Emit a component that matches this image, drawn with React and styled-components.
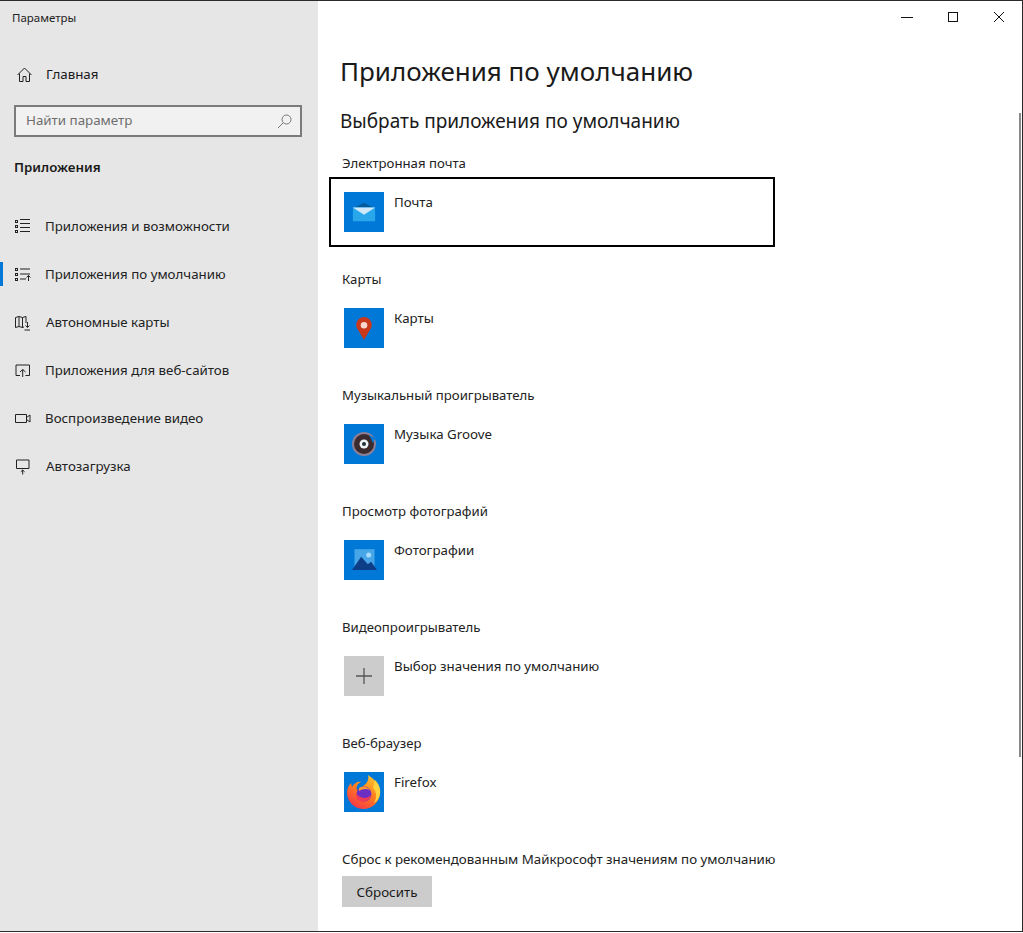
import React from 'react';
import styled, { createGlobalStyle } from 'styled-components';

const Global = createGlobalStyle`
  html, body { margin: 0; padding: 0; background: #fff; }
  body { font-family: "Noto Sans", "Open Sans", sans-serif; color: #1a1a1a; }
  * { box-sizing: border-box; }
`;

const Win = styled.div`
  position: relative;
  width: 1023px;
  height: 932px;
  display: flex;
  overflow: hidden;
  background: #fff;
  border-top: 1px solid #2b2b2b;
  border-right: 1px solid #2b2b2b;
  border-bottom: 1px solid #2b2b2b;
`;
const Sidebar = styled.aside`
  width: 318px;
  flex: none;
  background: #e6e6e6;
  display: flex;
  flex-direction: column;
`;
const AppTitle = styled.div`
  font-size: 11.5px;
  line-height: 16px;
  padding: 9px 0 0 12px;
  height: 49px;
  color: #222;
`;
const HomeRow = styled.div`
  height: 48px;
  display: flex;
  align-items: center;
  padding-left: 16px;
  gap: 13px;
  font-size: 13.35px;
`;
const Search = styled.div`
  margin: 7px 16px 0 14px;
  height: 32px;
  border: 2px solid #7b7b7b;
  background: #f1f1f1;
  display: flex;
  align-items: center;
  justify-content: space-between;
  padding: 0 7px 2px 10px;
  font-size: 13.35px;
  color: #6e6e6e;
`;
const SearchGlyph = styled.svg`
  width: 17px;
  height: 17px;
  margin-top: 2px;
  flex: none;
  fill: none;
  stroke: #777;
  stroke-width: 1;
`;
const Section = styled.div`
  margin: 20px 0 0 14px;
  height: 20px;
  line-height: 20px;
  font-size: 13.35px;
  font-weight: 600;
  color: #1a1a1a;
`;
const Nav = styled.nav`
  margin-top: 25px;
  display: flex;
  flex-direction: column;
`;
const NavItem = styled.div`
  position: relative;
  height: 48px;
  display: flex;
  align-items: center;
  padding-left: 14px;
  gap: ${p => p.$gap || 14}px;
  font-size: 13.3px;
  color: #222;
  ${p => p.$active && `
    &::before {
      content: "";
      position: absolute;
      left: 0; top: 12px;
      width: 3px; height: 24px;
      background: #0078d7;
    }
  `}
`;
const Glyph = styled.svg`
  width: 17px;
  height: 17px;
  flex: none;
  fill: none;
  stroke: #222;
  stroke-width: 1;
`;
const Main = styled.main`
  flex: 1;
  min-width: 0;
  display: flex;
  flex-direction: column;
`;
const Controls = styled.div`
  height: 32px;
  display: flex;
  justify-content: flex-end;
`;
const Ctl = styled.div`
  width: 46px;
  height: 32px;
  display: flex;
  align-items: center;
  justify-content: center;
`;
const Content = styled.div`
  padding-left: 22px;
  display: flex;
  flex-direction: column;
`;
const H1 = styled.h1`
  margin: 20px 0 0;
  height: 36px;
  line-height: 36px;
  font-size: 26px;
  font-weight: 400;
  color: #1a1a1a;
`;
const H2 = styled.h2`
  margin: 19px 0 0;
  height: 26px;
  line-height: 26px;
  font-size: 19px;
  font-weight: 400;
  color: #1a1a1a;
`;
const Groups = styled.div`
  margin-top: 19px;
  display: flex;
  flex-direction: column;
  gap: 22px;
`;
const Group = styled.section`
  display: flex;
  flex-direction: column;
  gap: 4px;
`;
const Label = styled.div`
  height: 20px;
  line-height: 20px;
  padding-left: 2px;
  font-size: ${p => p.$size || 13.2}px;
  color: #222;
`;
const Tile = styled.div`
  margin-left: -11px;
  width: 446px;
  height: 70px;
  border: 2px solid ${p => (p.$focus ? '#000' : 'transparent')};
  padding: 13px 13px;
  display: flex;
  gap: 10px;
`;
const TileIcon = styled.div`
  width: 40px;
  height: 40px;
  flex: none;
  background: ${p => p.$bg || '#0078d7'};
  display: flex;
  align-items: center;
  justify-content: center;
`;
const TileText = styled.div`
  line-height: 20px;
  font-size: 13.3px;
  color: #222;
`;
const Reset = styled.div`
  display: block;
`;
const ResetBtn = styled.div`
  margin: 7px 0 0 2px;
  width: 90px;
  height: 31px;
  background: #cccccc;
  display: flex;
  align-items: center;
  justify-content: center;
  font-size: 13.35px;
  color: #1a1a1a;
`;
const Scroll = styled.div`
  position: absolute;
  right: 1px;
  top: 112px;
  width: 2px;
  height: 644px;
  background: #8a8a8a;
`;

const Dots = () => (
  <>
    <rect x="1.5" y="2.5" width="2" height="2" />
    <rect x="1.5" y="7.5" width="2" height="2" />
    <rect x="1.5" y="12.5" width="2" height="2" />
  </>
);

const icons = {
  home: <path d="M8.5 2 1.5 9M8.500 2l7 7M3.500 7.500V15.500H7V10.500H10V15.500H13.500V7.500" />,
  list: <><Dots /><path d="M6 1.500H16M6 5.500H16M6 9.500H16M6 13.500H16" /></>,
  def: <><Dots /><path d="M6 3H16M6 8H16M6 13H12M14.500 15V9.500M12.500 11.500 14.500 9.500 16.500 11.500" /></>,
  map: <path d="M1.500 3.500 5 2.500 8.500 3.500 12 2.500V9M1.500 3.500V13.500L5 12.500 8.500 13.500 10 13M5 2.500V12.500M8.500 3.500V13.500M13.500 8V13M11.500 11.500 13.500 13.500 15.500 11.500M10.500 16H16" />,
  web: <path d="M6 13.500H2V3H15.500V13.500H11.500M8.700 15V7.500M6 10 8.700 7.500 11.500 10" />,
  video: <path d="M1.500 4.500H12.500V12.500H1.500ZM12.500 7.500 16 5V12L12.500 9.500" />,
  startup: <path d="M2.500 2H15V10.500H2.500ZM8.700 16.500V12M6.800 13.800 8.700 12 10.600 13.800" />,
};

const Mail = () => (
  <svg width="24" height="20" viewBox="0 0 26 20">
    <path d="M1 6 13 0 25 6V8H1Z" fill="#005a9e" />
    <rect x="1" y="5" width="24" height="15" fill="#28a8ea" />
    <path d="M1 5H25L13 13Z" fill="#cfe9fb" />
  </svg>
);
const Pin = () => (
  <svg width="18" height="25" viewBox="0 0 22 30">
    <path d="M11 29 4 17A9.500 9.500 0 1 1 18 17Z" fill="#c8391c" />
    <circle cx="11" cy="11" r="4" fill="#f6d8cf" />
  </svg>
);
const Groove = () => (
  <svg width="26" height="26" viewBox="0 0 26 26">
    <circle cx="13" cy="13" r="12" fill="#8d7f95" />
    <circle cx="13" cy="13" r="10" fill="#3b2a2e" />
    <path d="M18 4 24 7 22 12Z" fill="#0078d7" />
    <circle cx="13" cy="13" r="4.500" fill="#eef3f6" />
    <circle cx="13" cy="13" r="2" fill="#24303c" />
  </svg>
);
const Photo = () => (
  <svg width="25" height="24" viewBox="0 0 30 28">
    <rect x="3" y="1" width="24" height="22" fill="#46a6e8" />
    <circle cx="20" cy="8" r="3" fill="#a9dbfa" />
    <path d="M0 26 11 10 19 19 23 16 30 26Z" fill="#0c3d86" />
  </svg>
);
const Plus = () => (
  <svg width="18" height="18" viewBox="0 0 18 18" stroke="#555" strokeWidth="1.300">
    <path d="M9 1V17M1 9H17" />
  </svg>
);
const Firefox = () => (
  <svg width="36" height="36" viewBox="0 0 36 36">
    <defs>
      <linearGradient id="ff" x1="0.800" y1="0" x2="0.200" y2="1">
        <stop offset="0" stopColor="#ffc92e" />
        <stop offset="0.500" stopColor="#ff7a1f" />
        <stop offset="1" stopColor="#f4304f" />
      </linearGradient>
    </defs>
    <path d="M22 1C26 4 33 8 34 18A16.500 16.500 0 0 1 1 19C1 14 3 11 5 9L6 13C8 9 12 7 15 8 11 10 10 13 11 16 18 12 24 8 22 1Z" fill="url(#ff)" />
    <path d="M29 6C33 10 35 15 34 20 33 25 31 27 28 29 31 24 31 18 27 14Z" fill="#ffd23e" />
    <circle cx="18" cy="20" r="7.500" fill="#6b2fc4" />
    <path d="M10 19C13 24 20 26 25 21 24 28 15 30 11 25Z" fill="#ef3b56" />
    <path d="M13 14C16 12 21 12 24 16 20 14 16 15 13 17Z" fill="#ff9a2a" />
  </svg>
);

const nav = [
  ['list', 'Приложения и возможности'],
  ['def', 'Приложения по умолчанию', true],
  ['map', 'Автономные карты', false, 15],
  ['web', 'Приложения для веб-сайтов'],
  ['video', 'Воспроизведение видео'],
  ['startup', 'Автозагрузка', false, 15],
];
const groups = [
  ['Электронная почта', 'Почта', <Mail />, true],
  ['Карты', 'Карты', <Pin />],
  ['Музыкальный проигрыватель', 'Музыка Groove', <Groove />],
  ['Просмотр фотографий', 'Фотографии', <Photo />],
  ['Видеопроигрыватель', 'Выбор значения по умолчанию', <Plus />, false, '#cccccc'],
  ['Веб-браузер', 'Firefox', <Firefox />],
];

export default function App() {
  return (
    <>
      <Global />
      <Win>
        <Sidebar>
          <AppTitle>Параметры</AppTitle>
          <HomeRow>
            <Glyph viewBox="0 0 17 17">{icons.home}</Glyph>
            Главная
          </HomeRow>
          <Search>
            Найти параметр
            <SearchGlyph viewBox="0 0 17 17">
              <circle cx="10.500" cy="6.500" r="4.500" />
              <path d="M7.300 9.700 2 15" />
            </SearchGlyph>
          </Search>
          <Section>Приложения</Section>
          <Nav>
            {nav.map(([ic, t, a, g]) => (
              <NavItem key={t} $active={a} $gap={g}>
                <Glyph viewBox="0 0 17 17">{icons[ic]}</Glyph>
                {t}
              </NavItem>
            ))}
          </Nav>
        </Sidebar>
        <Main>
          <Controls>
            <Ctl>
              <svg width="12" height="12" viewBox="0 0 12 12" stroke="#111"><path d="M0 6.500H12" /></svg>
            </Ctl>
            <Ctl>
              <svg width="12" height="12" viewBox="0 0 12 12" fill="none" stroke="#111"><rect x="1.500" y="1.500" width="9" height="9" /></svg>
            </Ctl>
            <Ctl>
              <svg width="12" height="12" viewBox="0 0 12 12" stroke="#111"><path d="M1 1 11 11M11 1 1 11" /></svg>
            </Ctl>
          </Controls>
          <Content>
            <H1>Приложения по умолчанию</H1>
            <H2>Выбрать приложения по умолчанию</H2>
            <Groups>
              {groups.map(([l, t, ic, f, bg]) => (
                <Group key={l}>
                  <Label>{l}</Label>
                  <Tile $focus={f}>
                    <TileIcon $bg={bg}>{ic}</TileIcon>
                    <TileText>{t}</TileText>
                  </Tile>
                </Group>
              ))}
              <Reset>
                <Label $size={13.3}>Сброс к рекомендованным Майкрософт значениям по умолчанию</Label>
                <ResetBtn>Сбросить</ResetBtn>
              </Reset>
            </Groups>
          </Content>
        </Main>
        <Scroll />
      </Win>
    </>
  );
}
